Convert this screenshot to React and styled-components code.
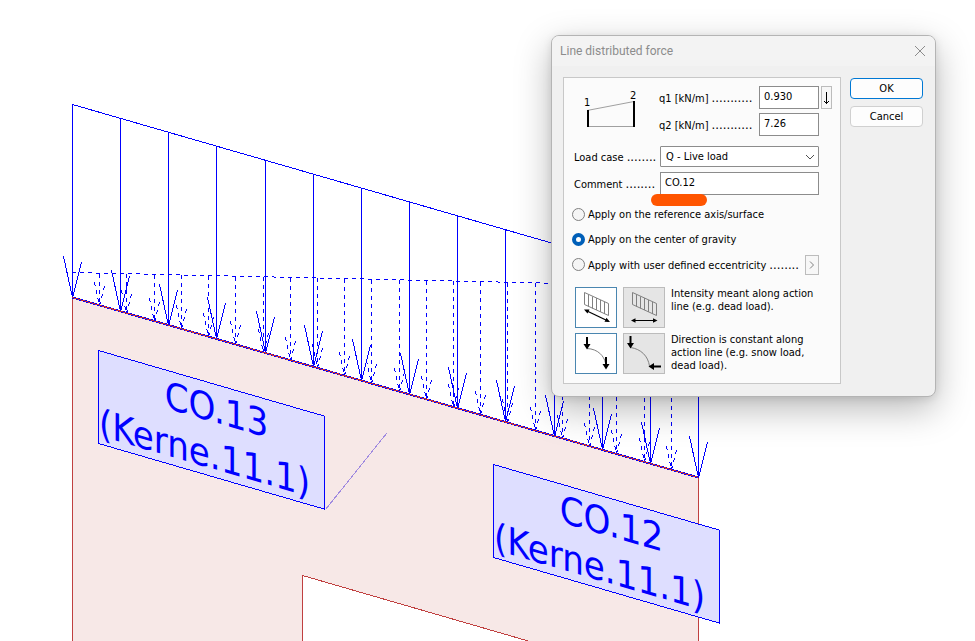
import React, { useState } from 'react';
import styled, { createGlobalStyle, css } from 'styled-components';

const GlobalStyle = createGlobalStyle`
  * {
    box-sizing: border-box;
  }

  body {
    margin: 0;
    background: #fff;
    font-family: "DejaVu Sans Condensed", "Noto Sans", sans-serif;
    font-size: 11px;
    line-height: 13px;
    color: #000;
  }

  button, input, select {
    margin: 0;
    padding: 0;
    font: inherit;
    color: inherit;
  }
`

/* ---------- drawing behind the dialog ---------- */

const Workspace = styled.main`
  position: relative;
  height: 100vh;
  overflow: hidden;
`

const Drawing = styled.svg`
  display: block;
  width: 100%;
  height: 100%;

  path {
    shape-rendering: crispEdges;
  }
`

const Wall = styled.path`
  fill: #f7e8e7;
  stroke: #c04040;
`

const Load = styled.path`
  fill: none;
  stroke: #0000ff;
  stroke-dasharray: ${props => (props.$dashed ? '4 4' : 'none')};
`

const TagBox = styled.path`
  fill: #dedeff;
  stroke: #0000ff;
`

const TagText = styled.text`
  fill: #0000ff;
  font-size: 38px;
`

const START = 72;
const SPAN = 626;

const beamY = x => Math.round(297 + (x - START) * 0.2875);

// one stem with an open head, its tip on the beam
const arrow = (x, top, w, left, right) => {
  const y = beamY(x);
  return [
    `M${x} ${top}V${y}`,
    `M${x - w} ${y - left}L${x} ${y}`,
    `M${x + w} ${y - right}L${x} ${y}`,
  ].join('');
};

const liveArrows = Array.from({ length: 14 }, (_, i) => {
  const x = START + Math.round((SPAN * i) / 13);
  return arrow(x, Math.round(104 + (x - START) * 0.2885), 9, 41, 35);
});

const deadArrows = Array.from({ length: 22 }, (_, i) => {
  const x = START + Math.round((SPAN * (i + 1)) / 23);
  return arrow(x, Math.round(272 + (x - START) * 0.022), 5, 23, 19);
});

const Tag = ({ x, y, name }) => (
  <g transform={`translate(${x} ${y}) skewY(16.2)`}>
    <TagBox d="M0 0H226V93H0Z" />
    <TagText x="118" y="38" textAnchor="middle">{name}</TagText>
    <TagText x="106" y="85" textAnchor="middle">(Kerne.11.1)</TagText>
  </g>
)

const Model = () => (
  <Drawing viewBox="0 0 975 641" preserveAspectRatio="xMinYMin slice">
    <g transform="translate(0.5 0.5)">
      <Wall d="M72 660V297L698 477V660H595L302 575V660Z" />
      <path d="M325 509L386 433" stroke="#a08ae0" />
      <Load d="M72 104L698 285" />
      {liveArrows.map(d => <Load key={d} d={d} />)}
      <Load $dashed d="M72 272L698 286" />
      {deadArrows.map(d => <Load key={d} d={d} $dashed />)}
      <path d="M72 297L698 477" stroke="#0000ff" strokeWidth="2" />
      <path d="M72 297L698 477" stroke="#d03030" />
      <Tag x={98} y={350} name="CO.13" />
      <Tag x={493} y={464} name="CO.12" />
    </g>
  </Drawing>
)

/* ---------- dialog ---------- */

const Dialog = styled.section`
  position: absolute;
  top: 35px;
  left: 551px;
  width: 385px;
  border: 1px solid #b4b4b4;
  border-radius: 8px;
  background: #f0f0f0;
  box-shadow: 0 12px 36px rgba(0, 0, 0, 0.28), 0 2px 8px rgba(0, 0, 0, 0.1);
  overflow: hidden;
`

const TitleBar = styled.header`
  display: flex;
  align-items: center;
  justify-content: space-between;
  height: 30px;
  padding: 0 8px;
  background: #f3f3f3;
`

const Title = styled.h1`
  margin: 0;
  font-family: Roboto, "Open Sans", sans-serif;
  font-size: 12px;
  font-weight: 400;
  color: #8c8c8c;
`

const CloseButton = styled.button`
  display: flex;
  border: 0;
  background: none;
  color: #8c8c8c;
`

const Body = styled.form`
  display: grid;
  grid-template-columns: 1fr 73px;
  gap: 9px;
  padding: 11px 12px 12px 11px;
`

const Panel = styled.div`
  display: flex;
  flex-direction: column;
  height: 307px;
  padding: 8px 8px 8px 10px;
  border: 1px solid #c8c8c8;
  background: #fbfbfb;
`

const Actions = styled.div`
  display: flex;
  flex-direction: column;
  gap: 7px;
  padding-top: 1px;
`

const ActionButton = styled.button`
  height: 21px;
  border: 1px solid ${props => (props.$primary ? '#0078d4' : '#d0d0d0')};
  border-radius: 4px;
  background: #fdfdfd;
`

const Intensity = styled.div`
  display: grid;
  grid-template-columns: 85px 1fr;
`

const Sketch = styled.svg`
  margin-left: 10px;
  font-size: 11px;
`

const Fields = styled.div`
  display: grid;
  gap: 4px;
`

const Row = styled.div`
  display: flex;
  align-items: center;
`

const Label = styled.label`
  display: flex;
  align-items: baseline;
  gap: 3px;
  width: ${props => props.$width}px;
  white-space: nowrap;
`

const Leader = styled.span`
  font-size: 13px;
`

const TextBox = styled.input`
  width: ${props => props.$width}px;
  height: 23px;
  padding: 0 4px 3px;
  border: 1px solid #8c8c8c;
  background: #fff;
`

const SmallButton = styled.button`
  display: flex;
  align-items: center;
  justify-content: center;
  width: ${props => props.$width}px;
  height: ${props => props.$height}px;
  margin-left: 2px;
  border: 1px solid #bcbcbc;
  background: #f7f7f7;
`

const Entries = styled.div`
  display: grid;
  gap: 5px;
  margin-top: 10px;
`

const SelectWrap = styled.div`
  position: relative;
  width: 159px;
`

const Select = styled.select`
  display: block;
  width: 100%;
  height: 21px;
  padding: 0 5px;
  border: 1px solid #8c8c8c;
  border-radius: 1px;
  background: #fff;
  appearance: none;
`

const Chevron = styled.svg`
  position: absolute;
  top: 8px;
  right: 4px;
  pointer-events: none;
`

const Commented = styled.div`
  position: relative;
`

const Marker = styled.span`
  position: absolute;
  left: -9px;
  bottom: -11px;
  width: 56px;
  height: 12px;
  border-radius: 6px;
  background: #ff5500;
`

const Choices = styled.div`
  margin: 7px 13px 0 -2px;
`

const Choice = styled.div`
  display: flex;
  align-items: center;
  justify-content: space-between;
  height: 25px;
`

const ChoiceMain = styled.div`
  display: flex;
  align-items: center;
`

const Radio = styled.input`
  appearance: none;
  width: 13px;
  height: 13px;
  margin-right: 3px;
  border: 1px solid #808080;
  border-radius: 50%;
  background: #f5f5f5;

  &:checked {
    border: 4px solid #005fb8;
    background: #fff;
  }
`

const Options = styled.div`
  display: grid;
  grid-template-columns: 42px 42px 1fr;
  column-gap: 6px;
  row-gap: 5px;
  margin: 10px 0 0 1px;
`

const Toggle = styled.button`
  height: 41px;
  border: 1px solid #bcbcbc;
  background: #e5e5e5;

  ${props => props.$on && css`
    border-color: #4a86b0;
    background: #fff;
  `}

  svg {
    display: block;
  }
`

const Note = styled.p`
  margin: 0;
  white-space: nowrap;
`

const Dots = ({ n }) => <Leader aria-hidden="true">{'.'.repeat(n)}</Leader>

const Hatch = () => (
  <path
    d="M8.5 4.5L32.500 15.500V27.500L8.500 16.500ZM12.500 6.500V18.500M16.500 8.500V20.500M20.500 10V22M24.500 12V24M28.500 14V26"
    fill="none"
    stroke="#808080"
  />
)

const icons = {
  slope: (
    <>
      <Hatch />
      <path d="M10 22.500L32 33" stroke="#000" strokeWidth="1.3" />
      <path d="M8 21.500L13.500 21.500L11.500 25.500ZM34 34L28.500 33.800L30.500 29.800Z" />
    </>
  ),
  level: (
    <>
      <Hatch />
      <path d="M10 32.500H32" stroke="#000" />
      <path d="M7 32.500L11.500 30.300V34.700ZM33.500 32.500L29 30.300V34.700Z" />
    </>
  ),
  constant: (
    <>
      <path d="M11 14.500C22 15 28 22 29.500 29" fill="none" stroke="#808080" />
      <path d="M10 3H12V10H14.500L11 15.500L7.500 10H10ZM29 23H31V30H33.500L30 35.500L26.500 30H29Z" />
    </>
  ),
  follow: (
    <>
      <path d="M6.500 13.500C17 15 24 22 25.500 32" fill="none" stroke="#808080" />
      <path d="M5.500 2H7.500V9H10L6.500 14.500L3 9H5.500ZM37 31.500V33.500H30V36L24.500 32.500L30 29V31.500Z" />
    </>
  ),
};

const IconToggle = ({ icon, label, on, onClick }) => (
  <Toggle type="button" aria-label={label} aria-pressed={on} $on={on} onClick={onClick}>
    <svg width="40" height="39" aria-hidden="true">{icons[icon]}</svg>
  </Toggle>
)

export default function App() {
  const [axis, setAxis] = useState('gravity');
  const [intensity, setIntensity] = useState('slope');
  const [direction, setDirection] = useState('constant');

  return (
    <Workspace>
      <GlobalStyle />
      <Model />
      <Dialog role="dialog" aria-labelledby="title">
        <TitleBar>
          <Title id="title">Line distributed force</Title>
          <CloseButton type="button" aria-label="Close">
            <svg width="14" height="12" stroke="currentColor">
              <path d="M2 1L12 11M12 1L2 11" />
            </svg>
          </CloseButton>
        </TitleBar>
        <Body onSubmit={e => e.preventDefault()}>
          <Panel>
            <Intensity>
              <Sketch width="62" height="50" aria-hidden="true">
                <text x="0" y="20">1</text>
                <text x="46" y="13">2</text>
                <path d="M3 24.500L50 15.500M3 40.500H50" stroke="#a0a0a0" />
                <path d="M4 24V41M50 15V41" stroke="#000" strokeWidth="2" />
              </Sketch>
              <Fields>
                <Row>
                  <Label htmlFor="q1" $width={100}>q1 [kN/m] <Dots n={11} /></Label>
                  <TextBox id="q1" $width={60} defaultValue="0.930" />
                  <SmallButton type="button" aria-label="Copy q1 to q2" $width={11} $height={23}>
                    <svg width="7" height="14" fill="none" stroke="#000">
                      <path d="M3.500 1V13M1 10L3.500 12.500L6 10" />
                    </svg>
                  </SmallButton>
                </Row>
                <Row>
                  <Label htmlFor="q2" $width={100}>q2 [kN/m] <Dots n={11} /></Label>
                  <TextBox id="q2" $width={60} defaultValue="7.26" />
                </Row>
              </Fields>
            </Intensity>
            <Entries>
              <Row>
                <Label htmlFor="loadcase" $width={86}>Load case <Dots n={8} /></Label>
                <SelectWrap>
                  <Select id="loadcase">
                    <option>Q - Live load</option>
                  </Select>
                  <Chevron width="10" height="6" fill="none" stroke="#505050">
                    <path d="M1 1L5 5L9 1" />
                  </Chevron>
                </SelectWrap>
              </Row>
              <Row>
                <Label htmlFor="comment" $width={86}>Comment <Dots n={8} /></Label>
                <Commented>
                  <TextBox id="comment" $width={159} defaultValue="CO.12" />
                  <Marker />
                </Commented>
              </Row>
            </Entries>
            <Choices>
              <Choice>
                <ChoiceMain>
                  <Radio type="radio" name="axis" id="reference" checked={axis === 'reference'} onChange={() => setAxis('reference')} />
                  <Label htmlFor="reference">Apply on the reference axis/surface</Label>
                </ChoiceMain>
              </Choice>
              <Choice>
                <ChoiceMain>
                  <Radio type="radio" name="axis" id="gravity" checked={axis === 'gravity'} onChange={() => setAxis('gravity')} />
                  <Label htmlFor="gravity">Apply on the center of gravity</Label>
                </ChoiceMain>
              </Choice>
              <Choice>
                <ChoiceMain>
                  <Radio type="radio" name="axis" id="user" checked={axis === 'user'} onChange={() => setAxis('user')} />
                  <Label htmlFor="user">Apply with user defined eccentricity <Dots n={8} /></Label>
                </ChoiceMain>
                <SmallButton type="button" aria-label="Eccentricity" $width={14} $height={20}>
                  <svg width="6" height="8" fill="none" stroke="#808080">
                    <path d="M1 0.500L4.500 4L1 7.500" />
                  </svg>
                </SmallButton>
              </Choice>
            </Choices>
            <Options>
              <IconToggle icon="slope" label="Along action line" on={intensity === 'slope'} onClick={() => setIntensity('slope')} />
              <IconToggle icon="level" label="Along projection" on={intensity === 'level'} onClick={() => setIntensity('level')} />
              <Note>Intensity meant along action<br />line (e.g. dead load).</Note>
              <IconToggle icon="constant" label="Constant direction" on={direction === 'constant'} onClick={() => setDirection('constant')} />
              <IconToggle icon="follow" label="Changing direction" on={direction === 'follow'} onClick={() => setDirection('follow')} />
              <Note>Direction is constant along<br />action line (e.g. snow load,<br />dead load).</Note>
            </Options>
          </Panel>
          <Actions>
            <ActionButton type="submit" $primary>OK</ActionButton>
            <ActionButton type="button">Cancel</ActionButton>
          </Actions>
        </Body>
      </Dialog>
    </Workspace>
  )
}
